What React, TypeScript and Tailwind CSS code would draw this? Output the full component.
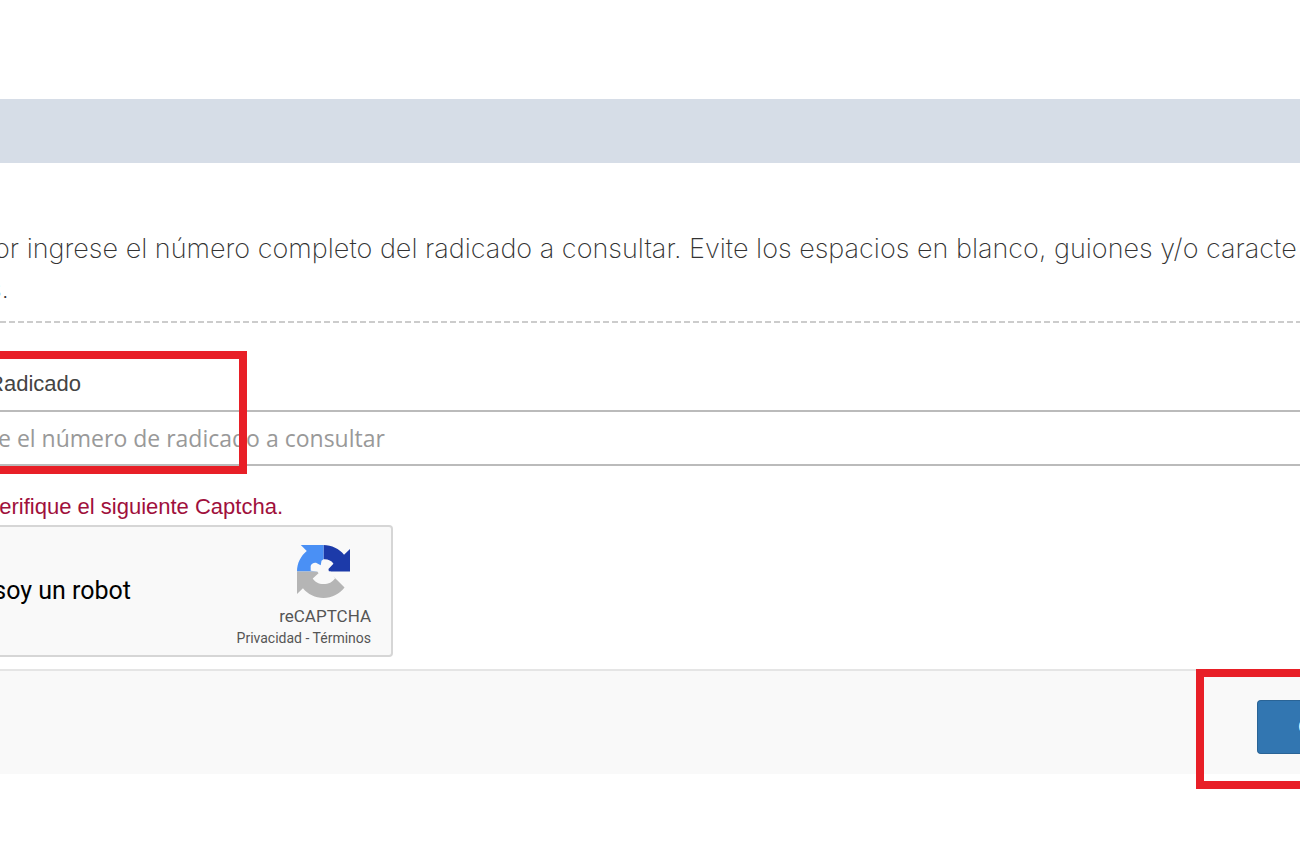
import type { ReactNode } from "react";

interface ClippedProps {
  className: string;
  children: ReactNode;
}

// Right-anchored line of text; whatever does not fit runs off the left edge
function Clipped({ className, children }: ClippedProps) {
  return (
    <span className={`flex justify-end overflow-hidden whitespace-nowrap ${className}`}>
      {children}
    </span>
  );
}

function RecaptchaLogo() {
  return (
    <svg viewBox="0 0 64 64" className="h-[53px] w-[53px]" aria-hidden="true">
      <path fill="#1c3aa9" d="M64 32V4.7l-7.2 7.1C50.9 4.7 42 .1 32 .1V32z" />
      <path fill="#4a90f5" d="M32 .1H4.6l7.2 7.2C4.6 13.1 0 22 0 32h32z" />
      <path
        fill="#b5b5b5"
        d="M0 32v27.3l7.2-7.2C13 59.3 22 63.9 32 63.9c10.4 0 19.6-5 25.4-12.6L38 32z"
      />
      {/* Knocked-out centre */}
      <path
        fill="#f9f9f9"
        d="M16.5 25.5C17 23 20 21 23 21.5l5.6 3 1-5.5 2.4-1.8c5-.4 10 1.6 12 5.3l-6 6.4.5 3.1h2L46 40c-3 4.5-8 7.2-14 7.2-6 0-10.5-2.700-13-6.700l7-6.500-1.500-2-8-1z"
      />
    </svg>
  );
}

function Captcha() {
  return (
    <div className="flex h-[132px] w-[393px] justify-between rounded-r-sm border-2 border-l-0 border-[#d6d6d6] bg-[#f9f9f9] pr-5">
      <Clipped className="w-[131px] items-center font-['Roboto',sans-serif] text-[25px] text-black">
        soy un robot
      </Clipped>
      <div className="flex flex-col items-end pt-[18px] font-['Roboto',sans-serif] text-[#555555]">
        <div className="mr-[21px]">
          <RecaptchaLogo />
        </div>
        <div className="mt-2 text-[17px] leading-5">reCAPTCHA</div>
        <div className="mt-1 text-[14px] leading-4">
          <a href="#privacidad">Privacidad</a> - <a href="#terminos">Términos</a>
        </div>
      </div>
    </div>
  );
}

export default function App() {
  return (
    <main className="relative min-h-screen overflow-hidden bg-white font-['Liberation_Sans',sans-serif]">
      <header className="mt-[99px] h-16 bg-[#d6dde7]" />

      {/* Instructions */}
      <div className="pt-[66px] font-['Inter',sans-serif] text-[27px] leading-10 font-extralight text-[#333333]">
        <p className="-ml-1.5 whitespace-nowrap">
          or ingrese el número completo del radicado a consultar. Evite los espacios en blanco, guiones y/o caracte
        </p>
        <Clipped className="w-[9px]">s.</Clipped>
      </div>
      <div className="mt-3 h-[2px] bg-[repeating-linear-gradient(to_right,#cccccc_0_6px,transparent_6px_9px)]" />

      <form onSubmit={(e) => e.preventDefault()}>
        {/* Filing number */}
        <div className="relative pt-[47px]">
          <label htmlFor="radicado" className="block text-[22px] leading-7 text-[#444444]">
            <Clipped className="w-[81px]">Radicado</Clipped>
          </label>
          <input
            id="radicado"
            type="text"
            placeholder="e el número de radicado a consultar"
            className="mt-3 block h-14 w-full border-y-2 border-[#bbbbbb] -indent-0.5 font-['Open_Sans',sans-serif] text-[23px] text-[#444444] outline-none placeholder:text-[#999999]"
          />
          <div className="pointer-events-none absolute top-7 left-0 h-[123px] w-[247px] border-8 border-l-0 border-[#e81f27]" />
        </div>

        <div className="pt-[27px]">
          <Clipped className="w-[283px] text-[22px] leading-7 text-[#a0103c]">erifique el siguiente Captcha.</Clipped>
          <div className="mt-1">
            <Captcha />
          </div>
        </div>

        {/* Actions */}
        <div className="relative mt-3 flex h-[105px] items-center justify-end border-t-2 border-[#e5e5e5] bg-[#f9f9f9] pt-2">
          <button
            type="submit"
            className="h-[54px] w-[43px] overflow-hidden rounded-l-sm border border-r-0 border-[#2a6496] bg-[#3276b1] pl-10 text-left text-[22px] text-white"
          >
            C
          </button>
          <div className="pointer-events-none absolute -top-0.5 right-0 h-[120px] w-[104px] border-8 border-r-0 border-[#e81f27]" />
        </div>
      </form>
    </main>
  );
}
